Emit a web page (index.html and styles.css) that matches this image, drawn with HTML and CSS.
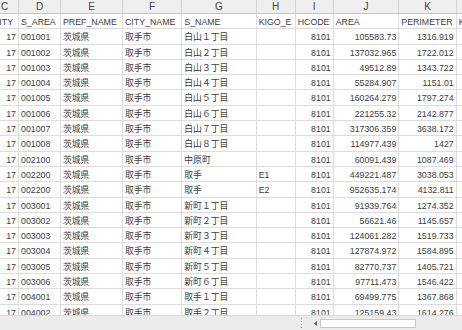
FILE: index.html
```html
<!DOCTYPE html>
<html lang="ja">
<head>
<meta charset="utf-8">
<title>Sheet</title>
<link rel="stylesheet" href="styles.css">
</head>
<body>
<div class="sheet">
  <div class="view">
    <div class="grid">
      <div class="ch">C</div><div class="ch">D</div><div class="ch">E</div><div class="ch">F</div><div class="ch">G</div><div class="ch">H</div><div class="ch">I</div><div class="ch">J</div><div class="ch">K</div><div class="ch">L</div>

      <div class="c">CITY</div><div class="c">S_AREA</div><div class="c">PREF_NAME</div><div class="c">CITY_NAME</div><div class="c">S_NAME</div><div class="c">KIGO_E</div><div class="c">HCODE</div><div class="c">AREA</div><div class="c">PERIMETER</div><div class="c">KEY_CODE</div>

      <div class="c n">17</div><div class="c">001001</div><div class="c">茨城県</div><div class="c">取手市</div><div class="c">白山１丁目</div><div class="c"></div><div class="c n">8101</div><div class="c n">105583.73</div><div class="c n">1316.919</div><div class="c"></div>
      <div class="c n">17</div><div class="c">001002</div><div class="c">茨城県</div><div class="c">取手市</div><div class="c">白山２丁目</div><div class="c"></div><div class="c n">8101</div><div class="c n">137032.965</div><div class="c n">1722.012</div><div class="c"></div>
      <div class="c n">17</div><div class="c">001003</div><div class="c">茨城県</div><div class="c">取手市</div><div class="c">白山３丁目</div><div class="c"></div><div class="c n">8101</div><div class="c n">49512.89</div><div class="c n">1343.722</div><div class="c"></div>
      <div class="c n">17</div><div class="c">001004</div><div class="c">茨城県</div><div class="c">取手市</div><div class="c">白山４丁目</div><div class="c"></div><div class="c n">8101</div><div class="c n">55284.907</div><div class="c n">1151.01</div><div class="c"></div>
      <div class="c n">17</div><div class="c">001005</div><div class="c">茨城県</div><div class="c">取手市</div><div class="c">白山５丁目</div><div class="c"></div><div class="c n">8101</div><div class="c n">160264.279</div><div class="c n">1797.274</div><div class="c"></div>
      <div class="c n">17</div><div class="c">001006</div><div class="c">茨城県</div><div class="c">取手市</div><div class="c">白山６丁目</div><div class="c"></div><div class="c n">8101</div><div class="c n">221255.32</div><div class="c n">2142.877</div><div class="c"></div>
      <div class="c n">17</div><div class="c">001007</div><div class="c">茨城県</div><div class="c">取手市</div><div class="c">白山７丁目</div><div class="c"></div><div class="c n">8101</div><div class="c n">317306.359</div><div class="c n">3638.172</div><div class="c"></div>
      <div class="c n">17</div><div class="c">001008</div><div class="c">茨城県</div><div class="c">取手市</div><div class="c">白山８丁目</div><div class="c"></div><div class="c n">8101</div><div class="c n">114977.439</div><div class="c n">1427</div><div class="c"></div>
      <div class="c n">17</div><div class="c">002100</div><div class="c">茨城県</div><div class="c">取手市</div><div class="c">中原町</div><div class="c"></div><div class="c n">8101</div><div class="c n">60091.439</div><div class="c n">1087.469</div><div class="c"></div>
      <div class="c n">17</div><div class="c">002200</div><div class="c">茨城県</div><div class="c">取手市</div><div class="c">取手</div><div class="c">E1</div><div class="c n">8101</div><div class="c n">449221.487</div><div class="c n">3038.053</div><div class="c"></div>
      <div class="c n">17</div><div class="c">002200</div><div class="c">茨城県</div><div class="c">取手市</div><div class="c">取手</div><div class="c">E2</div><div class="c n">8101</div><div class="c n">952635.174</div><div class="c n">4132.811</div><div class="c"></div>
      <div class="c n">17</div><div class="c">003001</div><div class="c">茨城県</div><div class="c">取手市</div><div class="c">新町１丁目</div><div class="c"></div><div class="c n">8101</div><div class="c n">91939.764</div><div class="c n">1274.352</div><div class="c"></div>
      <div class="c n">17</div><div class="c">003002</div><div class="c">茨城県</div><div class="c">取手市</div><div class="c">新町２丁目</div><div class="c"></div><div class="c n">8101</div><div class="c n">56621.46</div><div class="c n">1145.657</div><div class="c"></div>
      <div class="c n">17</div><div class="c">003003</div><div class="c">茨城県</div><div class="c">取手市</div><div class="c">新町３丁目</div><div class="c"></div><div class="c n">8101</div><div class="c n">124061.282</div><div class="c n">1519.733</div><div class="c"></div>
      <div class="c n">17</div><div class="c">003004</div><div class="c">茨城県</div><div class="c">取手市</div><div class="c">新町４丁目</div><div class="c"></div><div class="c n">8101</div><div class="c n">127874.972</div><div class="c n">1584.895</div><div class="c"></div>
      <div class="c n">17</div><div class="c">003005</div><div class="c">茨城県</div><div class="c">取手市</div><div class="c">新町５丁目</div><div class="c"></div><div class="c n">8101</div><div class="c n">82770.737</div><div class="c n">1405.721</div><div class="c"></div>
      <div class="c n">17</div><div class="c">003006</div><div class="c">茨城県</div><div class="c">取手市</div><div class="c">新町６丁目</div><div class="c"></div><div class="c n">8101</div><div class="c n">97711.473</div><div class="c n">1546.422</div><div class="c"></div>
      <div class="c n">17</div><div class="c">004001</div><div class="c">茨城県</div><div class="c">取手市</div><div class="c">取手１丁目</div><div class="c"></div><div class="c n">8101</div><div class="c n">69499.775</div><div class="c n">1367.868</div><div class="c"></div>
      <div class="c n">17</div><div class="c">004002</div><div class="c">茨城県</div><div class="c">取手市</div><div class="c">取手２丁目</div><div class="c"></div><div class="c n">8101</div><div class="c n">125159.43</div><div class="c n">1614.276</div><div class="c"></div>
    </div>
  </div>
  <div class="bar">
    <div class="tabs"></div>
    <svg class="grip" width="4" height="10" viewBox="0 0 4 10"><rect x="1" y="0" width="1" height="1" fill="#9a9a9a"/><rect x="1" y="3" width="1" height="1" fill="#9a9a9a"/><rect x="1" y="6" width="1" height="1" fill="#9a9a9a"/><rect x="1" y="9" width="1" height="1" fill="#9a9a9a"/></svg>
    <div class="arrow"><svg width="3" height="5" viewBox="0 0 3 5"><path d="M3 0 L0 2.5 L3 5 Z" fill="#606060"/></svg></div>
    <div class="thumb"></div>
  </div>
</div>
</body>
</html>
```
FILE: styles.css
```css
* { box-sizing: border-box; }
html, body { margin: 0; padding: 0; background: #ffffff; }
.sheet {
  width: 462px;
  height: 330px;
  display: flex;
  flex-direction: column;
  overflow: hidden;
  font-family: "Liberation Sans", "Noto Sans CJK JP", sans-serif;
}
.view {
  height: 315px;
  overflow: hidden;
  flex: none;
}
.grid {
  display: grid;
  grid-template-columns: 28px 42px 62px 59.3px 74.4px 39px 38px 65.6px 57.4px 60px;
  grid-template-rows: 14px;
  grid-auto-rows: 15.3px;
  margin-left: -9px;
  width: max-content;
}
.ch {
  background: #efefef;
  border-right: 1px solid #d2d2d2;
  border-bottom: 1px solid #c4c4c4;
  color: #444;
  font-size: 10px;
  line-height: 13px;
  text-align: center;
  overflow: hidden;
}
.c {
  border-right: 1px solid #dcdcdc;
  border-bottom: 1px solid #dcdcdc;
  color: #3c3c3c;
  font-size: 8.8px;
  line-height: 15px;
  padding: 1px 2px 0 2px;
  white-space: nowrap;
  overflow: hidden;
}
.n { text-align: right; }
.bar {
  flex: 1;
  background: #ececec;
  border-top: 1px solid #dadada;
  display: flex;
  align-items: center;
}
.tabs { width: 300px; flex: none; }
.grip { flex: none; margin-right: 6px; }
.arrow {
  width: 10px;
  height: 9px;
  display: flex;
  align-items: center;
  justify-content: center;
  flex: none;
}
.thumb {
  width: 96px;
  height: 9px;
  background: #ffffff;
  border: 1px solid #c8c8c8;
  flex: none;
}
```
